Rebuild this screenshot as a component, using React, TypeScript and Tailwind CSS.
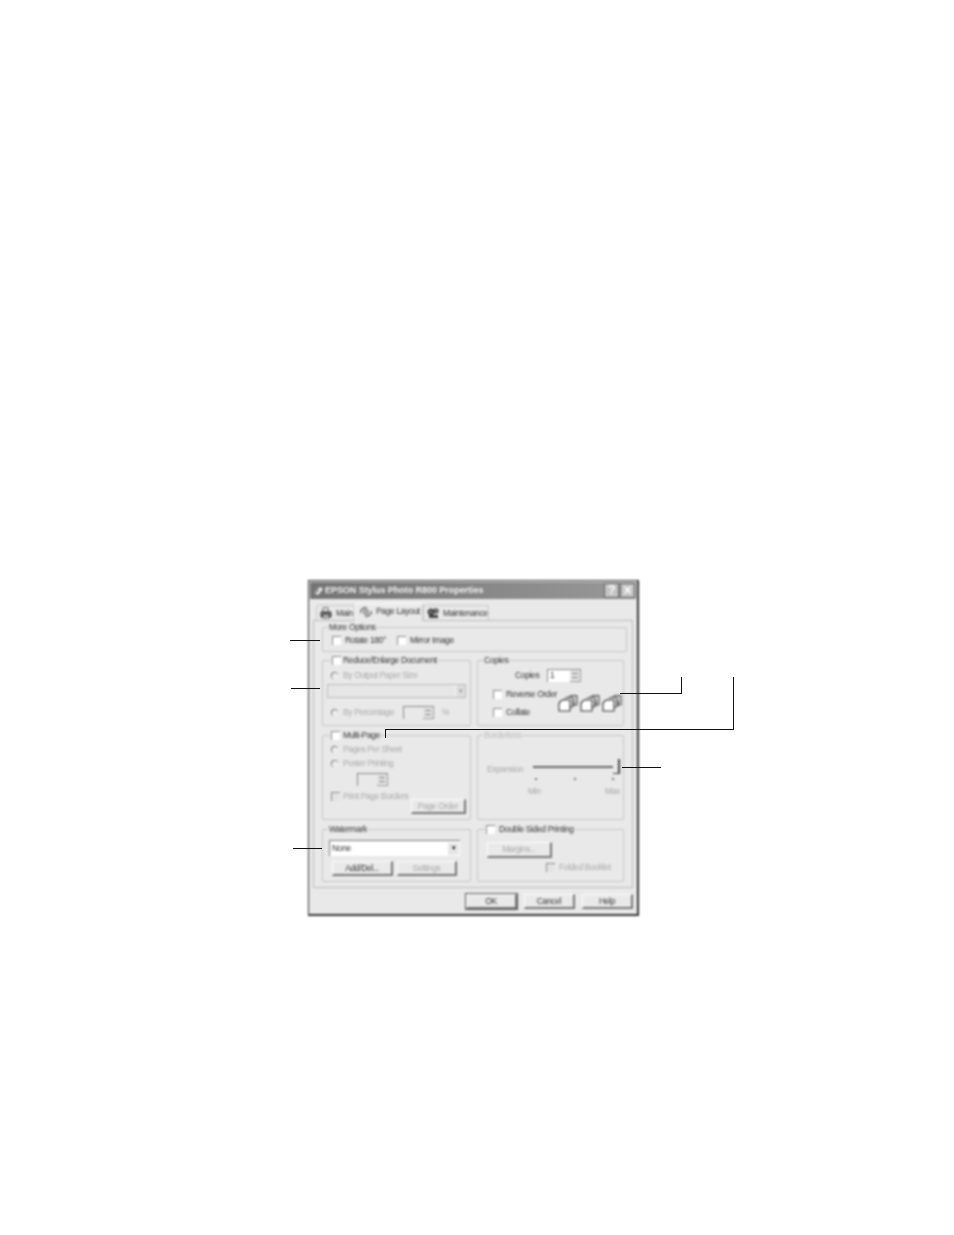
import type { ReactNode } from 'react'

type GroupProps = {
  title: ReactNode
  className: string
  titleClassName?: string
  children?: ReactNode
}

const Group = ({ title, className, titleClassName, children }: GroupProps) => (
  <div className={`relative rounded-[2px] border border-[#c4c4c4] ${className}`}>
    <div className={`absolute top-[-7px] flex h-[12px] items-center bg-[#e9e9e9] px-[1px] ${titleClassName ?? 'left-[5px]'}`}>{title}</div>
    {children}
  </div>
)

const Check = ({ disabled }: { disabled?: boolean }) => (
  <span
    className={`block size-[9px] shrink-0 border-t border-l border-[#8a8a8a] ${disabled ? 'bg-[#e4e4e4]' : 'bg-white'}`}
  />
)

const Radio = () => (
  <span className="block size-[7px] shrink-0 rounded-full border-t border-l border-[#777777] bg-[#efefef]" />
)

type CheckRowProps = {
  label: string
  disabled?: boolean
  className?: string
  labelClassName?: string
}

const CheckRow = ({ label, disabled, className, labelClassName }: CheckRowProps) => (
  <div className={`flex items-center gap-[4px] ${disabled ? 'text-[#a9a9a9]' : 'text-[#333333]'} ${className ?? ''}`}>
    <Check disabled={disabled} />
    <span className={`whitespace-nowrap ${labelClassName ?? ''}`}>{label}</span>
  </div>
)

const RadioRow = ({ label, className }: { label: string; className?: string }) => (
  <div className={`flex items-center gap-[5px] text-[#a9a9a9] ${className ?? ''}`}>
    <Radio />
    <span className="whitespace-nowrap">{label}</span>
  </div>
)

const Button = ({ label, className, disabled }: { label: string; className: string; disabled?: boolean }) => (
  <div
    className={`flex items-center justify-center border-t border-l border-b-2 border-r-2 border-t-white border-l-white border-b-[#777777] border-r-[#777777] bg-[#e9e9e9] ${
      disabled ? 'text-[#a9a9a9]' : 'text-[#333333]'
    } ${className}`}
  >
    {label}
  </div>
)

const Spinner = ({ className, disabled }: { className: string; disabled?: boolean }) => (
  <div className={`flex items-stretch border-t border-l border-[#888888] ${disabled ? 'bg-[#e9e9e9]' : 'bg-white'} ${className}`}>
    <span className={`flex-1 pl-[2px] leading-[11px] ${disabled ? 'text-transparent' : 'text-[#333333]'}`}>1</span>
    <span className="flex w-[11px] flex-col justify-center gap-[3px] border-r border-b border-[#999999] bg-[#e4e4e4] px-[2px]">
      <span className="h-[1px] bg-[#777777]" />
      <span className="h-[1px] bg-[#777777]" />
    </span>
  </div>
)

const CopyIcon = ({ n }: { n: number }) => (
  <svg width="20" height="18" viewBox="0 0 20 18" className="shrink-0">
    <path d="M9 5 L12 1.5 H19 V11 H15 Z" fill="#cfcfcf" stroke="#444" strokeWidth="1" />
    <path d="M5 7 L8 3.5 H15 V13 H11 Z" fill="#e2e2e2" stroke="#444" strokeWidth="1" />
    <path d="M1 9 L4 6 H12 V17 H1 Z" fill="#fff" stroke="#333" strokeWidth="1.1" />
    <text x="14" y="11" fontSize="6" fill="#222" fontFamily="Liberation Sans, sans-serif">{n}</text>
  </svg>
)

const TabIcon = ({ variant }: { variant: 'main' | 'layout' | 'tools' }) => (
  <svg width="12" height="12" viewBox="0 0 12 12" className="shrink-0">
    {variant === 'main' && (
      <>
        <path d="M3 1 H8 V5 H3 Z" fill="#fff" stroke="#555" />
        <path d="M1 5 H11 V10 H1 Z" fill="#6f6f6f" stroke="#333" />
        <path d="M3 8 H9 V11 H3 Z" fill="#ddd" stroke="#555" />
      </>
    )}
    {variant === 'layout' && (
      <>
        <path d="M1 7 C0 3 4 1 7 2" fill="none" stroke="#555" strokeWidth="1.2" />
        <path d="M11 5 C12 9 8 11 5 10" fill="none" stroke="#555" strokeWidth="1.2" />
        <path d="M4 4 H8 V8 H4 Z" fill="#ccc" stroke="#666" />
      </>
    )}
    {variant === 'tools' && (
      <>
        <circle cx="4" cy="5" r="3" fill="#666" stroke="#222" />
        <circle cx="9" cy="4" r="2.2" fill="#888" stroke="#222" />
        <path d="M2 8 H11 V11 H2 Z" fill="#444" />
      </>
    )}
  </svg>
)

const Tab = ({ label, icon, active, className }: { label: string; icon: 'main' | 'layout' | 'tools'; active?: boolean; className: string }) => (
  <div
    className={`flex items-center gap-[4px] rounded-t-[2px] border-x border-t border-[#c8c8c8] bg-[#e9e9e9] text-[#333333] ${
      active ? 'relative z-10 mb-[-1px] h-[18px] border-t-white border-l-white pb-[2px]' : 'mt-[2px] h-[15px]'
    } ${className}`}
  >
    <TabIcon variant={icon} />
    <span className="whitespace-nowrap">{label}</span>
  </div>
)

const Line = ({ className }: { className: string }) => <div className={`absolute bg-[#111111] ${className}`} />

const App = () => {
  return (
    <div
      className="relative h-[1235px] w-[954px] overflow-hidden bg-white pt-[580px] pl-[308px] text-[8.5px] leading-[11px] tracking-[-0.36px]"
      style={{ fontFamily: '"Liberation Sans", Arial, sans-serif' }}
    >
      {/* dialog */}
      <div className="flex h-[336px] w-[331px] flex-col border border-b-2 border-r-2 border-[#333333] bg-[#e9e9e9] p-[1px] blur-[0.8px]">
        {/* title bar */}
        <div className="flex h-[17px] shrink-0 items-center gap-[1px] bg-gradient-to-r from-[#747474] to-[#999999] pr-[1px] pl-[3px]">
          <svg width="11" height="10" viewBox="0 0 11 10" className="shrink-0">
            <path d="M1 7 L7 1 L10 3 L5 9 Z" fill="#eeeeee" />
            <path d="M2 7 L6 4" stroke="#444" />
          </svg>
          <span className="flex-1 text-[9px] font-bold tracking-[-0.05px] whitespace-nowrap text-[#f4f4f4]">
            EPSON Stylus Photo R800 Properties
          </span>
          <span className="flex h-[15px] w-[15px] items-center justify-center border border-[#666666] bg-[#c4c4c4] text-[12px] font-bold text-[#ffffff]">?</span>
          <span className="flex h-[15px] w-[15px] items-center justify-center border border-[#666666] bg-[#c4c4c4] text-[14px] font-bold text-[#ffffff]">×</span>
        </div>

        {/* tabs */}
        <div className="mt-[3px] flex h-[18px] shrink-0 items-end pl-[6px]">
          <Tab label="Main" icon="main" className="w-[39px] pl-[3px]" />
          <Tab label="Page Layout" icon="layout" active className="w-[68px] pl-[4px]" />
          <Tab label="Maintenance" icon="tools" className="w-[66px] pl-[3px]" />
        </div>

        {/* page */}
        <div className="mx-[3px] flex h-[268px] shrink-0 flex-col border border-[#bbbbbb] pt-[6px] pr-[5px] pl-[8px]">
          <Group title={<span className="text-[#333333]">More Options</span>} className="h-[25px] shrink-0">
            <div className="flex items-center pt-[7px] pl-[9px]">
              <CheckRow label="Rotate 180°" className="w-[65px]" />
              <CheckRow label="Mirror Image" />
            </div>
          </Group>

          <div className="mt-[8px] grid grid-cols-[149px_147px] grid-rows-[66px_85px_53px] gap-x-[6px] gap-y-[9px]">
            <Group title={<CheckRow label="Reduce/Enlarge Document" labelClassName="-ml-[2px]" />} titleClassName="left-[8px]">
              <div className="flex flex-col pt-[9px] pr-[3px] pl-[4px]">
                <RadioRow label="By Output Paper Size" className="pl-[4px]" />
                <div className="mt-[3px] flex h-[14px] w-[139px] justify-end border border-[#bdbdbd] bg-[#e6e6e6]">
                  <span className="flex w-[10px] items-center justify-center border-l border-[#f8f8f8] bg-[#dddddd] text-[6px] text-[#999999]">▼</span>
                </div>
                <div className="mt-[8px] flex items-center">
                  <RadioRow label="By Percentage" className="w-[76px] pl-[4px]" />
                  <Spinner disabled className="h-[13px] w-[31px]" />
                  <span className="ml-[8px] text-[#a9a9a9]">%</span>
                </div>
              </div>
            </Group>

            <Group title={<span className="text-[#333333]">Copies</span>}>
              <div className="flex items-center pt-[8px] pl-[37px] text-[#333333]">
                <span className="w-[32px]">Copies</span>
                <Spinner className="h-[13px] w-[34px]" />
              </div>
              <div className="flex items-center pt-[7px] pl-[15px]">
                <div className="flex w-[63px] flex-col gap-[7px]">
                  <CheckRow label="Reverse Order" />
                  <CheckRow label="Collate" />
                </div>
                <div className="mt-[-2px] ml-[2px] flex gap-[2px]">
                  <CopyIcon n={1} />
                  <CopyIcon n={2} />
                  <CopyIcon n={3} />
                </div>
              </div>
            </Group>

            <Group title={<CheckRow label="Multi-Page" labelClassName="-ml-[1px]" />} titleClassName="left-[7px]">
              <div className="flex flex-col px-[8px] pt-[8px]">
                <RadioRow label="Pages Per Sheet" />
                <RadioRow label="Poster Printing" className="mt-[3px]" />
                <Spinner disabled className="mt-[4px] ml-[26px] h-[13px] w-[31px]" />
                <CheckRow label="Print Page Borders" disabled className="mt-[5px]" labelClassName="-ml-[1px]" />
              </div>
              <Button label="Page Order" disabled className="absolute right-[4px] bottom-[5px] h-[15px] w-[55px]" />
            </Group>

            <Group title={<span className="text-[#bbbbbb]">Borderless</span>}>
              <div className="flex items-start pt-[28px] pl-[9px] text-[#a9a9a9]">
                <span className="w-[46px]">Expansion</span>
                <div className="relative mt-[2px] h-[2px] w-[80px] bg-[#666666]">
                  <div className="absolute top-[-7px] right-[-7px] h-[15px] w-[7px] border-r-2 border-b border-[#444444] bg-[#e9e9e9]" />
                </div>
              </div>
              <div className="mt-[3px] ml-[57px] flex w-[79px] justify-between">
                <span className="size-[2px] bg-[#777777]" />
                <span className="size-[2px] bg-[#777777]" />
                <span className="size-[2px] bg-[#777777]" />
              </div>
              <div className="mt-[6px] ml-[50px] flex w-[92px] justify-between text-[#a9a9a9]">
                <span>Min</span>
                <span>Max</span>
              </div>
            </Group>

            <Group title={<span className="text-[#333333]">Watermark</span>}>
              <div className="mt-[10px] mr-[10px] ml-[6px] flex h-[16px] items-center border-t border-l border-[#777777] bg-white pr-[1px] pl-[2px] text-[#333333]">
                <span className="flex-1">None</span>
                <span className="flex h-[12px] w-[11px] items-center justify-center bg-[#e6e6e6] text-[6px] text-[#111111]">▼</span>
              </div>
              <div className="mt-[5px] ml-[9px] flex gap-[4px]">
                <Button label="Add/Del..." className="h-[15px] w-[61px]" />
                <Button label="Settings" disabled className="h-[15px] w-[60px]" />
              </div>
            </Group>

            <Group title={<CheckRow label="Double Sided Printing" />} titleClassName="left-[7px]">
              <div className="flex flex-col pt-[12px] pl-[9px]">
                <Button label="Margins..." disabled className="h-[16px] w-[65px]" />
                <CheckRow label="Folded Booklet" disabled className="mt-[4px] ml-[59px]" />
              </div>
            </Group>
          </div>
        </div>

        {/* bottom buttons */}
        <div className="mt-[6px] flex justify-end gap-[7px] pr-[3px]">
          <Button label="OK" className="h-[15px] w-[51px] outline outline-[#555555]" />
          <Button label="Cancel" className="h-[15px] w-[51px]" />
          <Button label="Help" className="h-[15px] w-[51px]" />
        </div>
      </div>

      {/* callout lines */}
      <Line className="top-[640px] left-[290px] h-px w-[30px]" />
      <Line className="top-[688px] left-[291px] h-px w-[29px]" />
      <Line className="top-[848px] left-[293px] h-px w-[29px]" />
      <Line className="top-[693px] left-[620px] h-px w-[61px]" />
      <Line className="top-[677px] left-[681px] h-[17px] w-px" />
      <Line className="top-[729px] left-[385px] h-px w-[349px]" />
      <Line className="top-[729px] left-[385px] h-[9px] w-px" />
      <Line className="top-[677px] left-[733px] h-[52px] w-px" />
      <Line className="top-[767px] left-[622px] h-px w-[39px]" />
    </div>
  )
}

export default App
